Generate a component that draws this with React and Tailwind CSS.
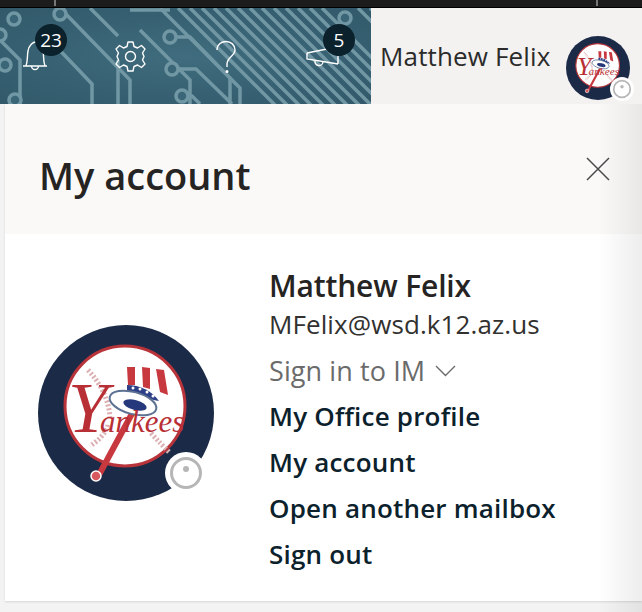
const font = { fontFamily: '"Open Sans", "Noto Sans", sans-serif' };

const traces = [
  "M-10 30 L20 60 L20 104", "M60 8 L130 80 L130 104", "M50 40 L92 84 L92 104", "M90 8 L118 36",
  "M118 60 L118 104", "M160 8 L240 88 L240 104", "M140 30 L190 80 L190 104",
];
const stripes = [178, 190, 202, 214, 226, 238, 250, 262, 274, 286, 298, 310, 322, 358, 370];
const pads = [[14, 19], [60, 14], [0, 35], [5, 65], [170, 37], [172, 69], [182, 96], [345, 18], [15, 100]];

function CircuitBg() {
  return (
    <svg className="absolute inset-0 w-full h-full" viewBox="0 0 371 96" preserveAspectRatio="none">
      <defs>
        <radialGradient id="bgGlow" cx="50%" cy="50%" r="70%">
          <stop offset="0%" stopColor="#3f6c7e" />
          <stop offset="100%" stopColor="#31596a" />
        </radialGradient>
      </defs>
      <rect width="371" height="96" fill="url(#bgGlow)" />
      <g fill="none" stroke="#7097a3" strokeWidth="3.5" transform="translate(0 -8)">
        {traces.map((d) => <path key={d} d={d} />)}
        {stripes.map((x) => <path key={x} d={`M${x} 8 L${x + 110} 118`} />)}
        <path d="M170 37 L190 37 L230 78 L230 104" />
        <path d="M172 69 L196 69 L232 104" />
        <path d="M182 96 L192 96 L200 104" />
        <path d="M130 10 L170 10" />
        {pads.map(([x, y]) => <circle key={`${x}-${y}`} cx={x} cy={y} r="6" fill="#3a6678" />)}
      </g>
    </svg>
  );
}

function Badge({ children, className }) {
  return (
    <div style={font} className={`absolute w-8 h-8 rounded-full bg-[#0b212c] text-white text-[19px] leading-8 text-center ${className}`}>
      {children}
    </div>
  );
}

function TopIcons() {
  return (
    <div className="relative w-[371px] h-full overflow-hidden">
      <CircuitBg />
      <svg className="absolute left-[21px] top-[32px]" width="28" height="32" viewBox="0 0 28 32" fill="none" stroke="#fff" strokeWidth="1.4">
        <path d="M2 26 H26 M5 26 C7 20 6 16 7 11 C8 5 12 2 15 2 C19 2 21 6 22 11 C23 16 22 21 24 26" />
        <path d="M10.5 26 A3.5 3.5 0 0 0 17.5 26" />
      </svg>
      <Badge className="left-[35px] top-[16px]">23</Badge>
      <svg className="absolute left-[114px] top-[32px]" width="33" height="33" viewBox="0 0 33 33" fill="none" stroke="#fff" strokeWidth="1.4" strokeLinejoin="round">
        <circle cx="16.5" cy="16.5" r="5" />
        <path d="M14 2 H19 L20 6.5 L23.5 8 L27.5 5.5 L31 9 L28.5 13 L30 16.5 L28.5 20 L31 24 L27.5 27.5 L23.5 25 L20 26.5 L19 31 H14 L13 26.5 L9.5 25 L5.5 27.5 L2 24 L4.5 20 L3 16.5 L4.5 13 L2 9 L5.5 5.5 L9.5 8 L13 6.5 Z" />
      </svg>
      <svg className="absolute left-[214px] top-[32px]" width="24" height="34" viewBox="0 0 24 34" fill="none" stroke="#fff" strokeWidth="1.4">
        <path d="M3 10 C3 4 8 1.5 12 1.5 C17 1.5 21 5 21 10 C21 16 13 17 13 24 V27" />
        <circle cx="13" cy="31.5" r="0.8" fill="#fff" />
      </svg>
      <svg className="absolute left-[305px] top-[40px]" width="36" height="26" viewBox="0 0 36 26" fill="none" stroke="#fff" strokeWidth="1.4">
        <path d="M2 5 L22 1 M2 5 V11 L33 16 M33 8 V16" />
        <path d="M10 13 A4 4 0 0 0 18 14" />
      </svg>
      <Badge className="left-[323px] top-[16px]">5</Badge>
    </div>
  );
}

function YankeesLogo({ size, badgeClass, ringSize }) {
  return (
    <div className="relative shrink-0" style={{ width: size, height: size }}>
      <svg width={size} height={size} viewBox="0 0 176 176">
        <circle cx="88" cy="88" r="88" fill="#1b2a47" />
        <circle cx="87" cy="81" r="60" fill="#fff" stroke="#b8343a" strokeWidth="3" />
        <g fill="none" stroke="#dcb0b2" strokeWidth="5" strokeDasharray="2 2">
          <path d="M50 45 C64 60 72 78 72 95" />
          <path d="M70 100 C68 108 60 116 52 121" />
          <path d="M113 108 C120 116 126 122 132 128" />
        </g>
        <path d="M62 148 L97 83" stroke="#c8383f" strokeWidth="6" strokeLinecap="round" fill="none" />
        <path d="M86 85 L96 83" stroke="#e8a0a3" strokeWidth="2" fill="none" />
        <circle cx="58" cy="151" r="5" fill="#d85a5f" stroke="#fff" strokeWidth="1.5" />
        <path d="M89 42 L129 45 L134 72 L90 60 Z" fill="#fff" />
        <path d="M89 42 L97 42 L97 60 L90 60 Z M104 42 L112 43 L112 64 L105 62 Z M118 44 L126 45 L130 70 L122 67 Z" fill="#c8383f" />
        <path d="M89 60 C102 60 114 66 121 76 C110 74 98 70 89 66 Z" fill="#2d3f86" />
        <g fill="#fff">
          <circle cx="95" cy="63" r="1.5" /><circle cx="102" cy="64" r="1.5" /><circle cx="109" cy="67" r="1.5" /><circle cx="115" cy="71" r="1.5" />
        </g>
        <ellipse cx="95" cy="78" rx="24" ry="11" transform="rotate(15 95 78)" fill="#fff" stroke="#5d7192" strokeWidth="2" />
        <ellipse cx="97" cy="80" rx="12" ry="5" transform="rotate(15 97 80)" fill="#26387c" />
        <text x="30" y="107" fill="#b92f36" fontFamily="'Liberation Serif', serif" fontStyle="italic">
          <tspan fontSize="72">Y</tspan>
          <tspan fontSize="31" dx="-8">ankees</tspan>
        </text>
      </svg>
      <svg className={`absolute ${badgeClass}`} width={ringSize} height={ringSize} viewBox="0 0 42 42">
        <circle cx="21" cy="21" r="21" fill="#fff" />
        <circle cx="21" cy="21" r="14.5" fill="#fff" stroke="#b6b6b6" strokeWidth="3" />
        <circle cx="21" cy="17" r="3" fill="#b6b6b6" />
      </svg>
    </div>
  );
}

const links = ["My Office profile", "My account", "Open another mailbox", "Sign out"];

export default function App() {
  return (
    <div style={font} className="relative w-[642px] h-[612px] overflow-hidden bg-[#f3f3f3]">
      <div className="relative h-[8px] bg-[#1c1c1c] border-b border-black">
        <div className="absolute left-[54px] top-0 w-[2px] h-[6px] bg-[#777]" />
        <div className="absolute left-[596px] top-0 w-[2px] h-[6px] bg-[#777]" />
      </div>
      <div className="flex h-[96px]">
        <TopIcons />
        <div className="flex-1 flex items-center bg-[#f3f2f1]">
          <span className="ml-[9px] text-[26px] tracking-[0.15px] text-[#2b2b2b] whitespace-nowrap">Matthew Felix</span>
          <div className="ml-auto mr-[12px] mt-[24px]">
            <YankeesLogo size={64} badgeClass="left-[44px] top-[41px]" ringSize={24} />
          </div>
        </div>
      </div>
      <div className="ml-[5px] h-[497px] bg-white shadow-[0_1px_2px_rgba(0,0,0,0.12)]">
        <div className="h-[130px] bg-[#faf9f8] flex items-center justify-between pl-[34px] pr-[32px] pt-[11px]">
          <h1 className="text-[38px] font-semibold text-[#252423] leading-none whitespace-nowrap">My account</h1>
          <svg className="mb-[12px]" width="24" height="24" viewBox="0 0 24 24" fill="none" stroke="#4a4a4a" strokeWidth="1.5">
            <path d="M1 1 L23 23 M23 1 L1 23" />
          </svg>
        </div>
        <div className="flex items-start pl-[33px]">
          <div className="mt-[91px]">
            <YankeesLogo size={176} badgeClass="left-[127px] top-[127px]" ringSize={42} />
          </div>
          <div className="ml-[55px] mt-[34px] flex flex-col">
            <div className="text-[30px] font-semibold tracking-[-0.15px] leading-[36px] text-[#252423]">Matthew Felix</div>
            <div className="mt-[2px] text-[26px] tracking-[0.1px] leading-[36px] text-[#323130]">MFelix@wsd.k12.az.us</div>
            <div className="flex items-center gap-[10px] mt-[11px] h-[36px] text-[27px] tracking-[0.1px] text-[#6b6b6b]">
              Sign in to IM
              <svg width="21" height="12" viewBox="0 0 21 12" fill="none" stroke="#6b6b6b" strokeWidth="1.4">
                <path d="M1 1 L10.5 10.5 L20 1" />
              </svg>
            </div>
            <div className="mt-[4px]">
              {links.map((label) => (
                <div key={label} className="text-[26px] font-semibold tracking-[0.2px] leading-[46px] text-[#0b212c] whitespace-nowrap">
                  {label}
                </div>
              ))}
            </div>
          </div>
        </div>
      </div>
      <div className="absolute top-[104px] right-0 bottom-0 w-[44px] bg-gradient-to-r from-transparent to-black/[0.07]" />
    </div>
  );
}
